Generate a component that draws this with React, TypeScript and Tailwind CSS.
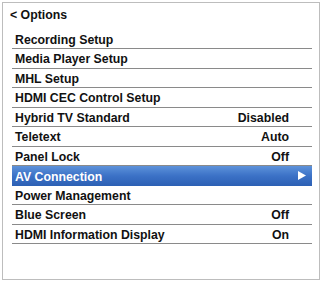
const rows: { label: string; value?: string; active?: boolean }[] = [
  { label: 'Recording Setup' },
  { label: 'Media Player Setup' },
  { label: 'MHL Setup' },
  { label: 'HDMI CEC Control Setup' },
  { label: 'Hybrid TV Standard', value: 'Disabled' },
  { label: 'Teletext', value: 'Auto' },
  { label: 'Panel Lock', value: 'Off' },
  { label: 'AV Connection', active: true },
  { label: 'Power Management' },
  { label: 'Blue Screen', value: 'Off' },
  { label: 'HDMI Information Display', value: 'On' },
];

export default function App() {
  return (
    <div className="w-[321px] h-[281px] bg-white p-[2px] font-['Liberation_Sans',Arial,sans-serif] font-bold text-[12.3px] text-[#111]">
      <div className="h-[278px] w-[318px] border border-[#bdbdbd] flex flex-col">
        <div className="h-[26.5px] pl-[7px] pt-[5px] leading-[14px]">&lt; Options</div>
        <div className="ml-[9px] mr-[7px] flex flex-col">
          {rows.map((r) =>
            r.active ? (
              <div
                key={r.label}
                className="h-[19.5px] flex items-center justify-between pl-[3px] pr-[6px] text-white bg-gradient-to-b from-[#5d92da] via-[#3b71c6] to-[#2c60b4]"
              >
                <span className="pt-[2px]">{r.label}</span>
                <svg width="8" height="9" viewBox="0 0 8 9">
                  <path d="M0 0 L8 4.5 L0 9 Z" fill="#fff" />
                </svg>
              </div>
            ) : (
              <div
                key={r.label}
                className="h-[19.5px] flex items-center justify-between pl-[3px] pr-[23px] border-b border-[#8a8a8a]"
              >
                <span className="pt-[2px]">{r.label}</span>
                {r.value && <span className="pt-[2px]">{r.value}</span>}
              </div>
            )
          )}
        </div>
      </div>
    </div>
  );
}
